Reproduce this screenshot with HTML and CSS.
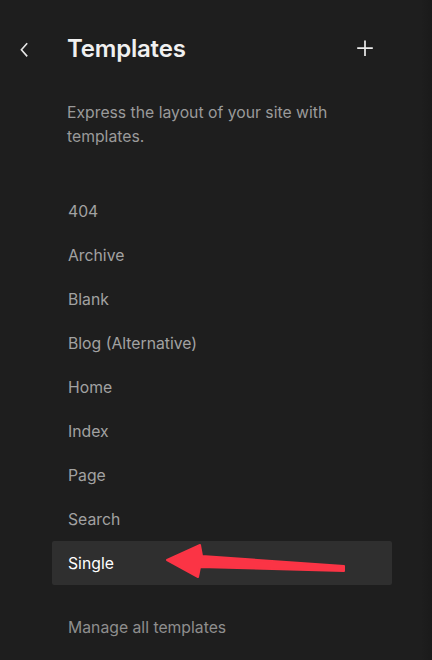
FILE: index.html
```html
<!DOCTYPE html>
<html lang="en">
<head>
<meta charset="utf-8">
<title>Templates</title>
<link rel="stylesheet" href="styles.css">
</head>
<body>
<div class="panel">
  <div class="header">
    <button class="icon-btn back" aria-label="Back">
      <svg width="24" height="24" viewBox="0 0 24 24"><path d="M15.2 6.2L9.4 12.8l5.8 6.6" fill="none" stroke="#e8e8e8" stroke-width="1.6"/></svg>
    </button>
    <h1 class="title">Templates</h1>
    <button class="icon-btn add" aria-label="Add template">
      <svg width="24" height="24" viewBox="0 0 24 24"><path d="M12 3.5v15.5M4.2 11.2h15.6" fill="none" stroke="#ececec" stroke-width="1.7"/></svg>
    </button>
  </div>
  <p class="desc">Express the layout of your site with templates.</p>
  <ul class="list">
    <li class="item">404</li>
    <li class="item">Archive</li>
    <li class="item">Blank</li>
    <li class="item">Blog (Alternative)</li>
    <li class="item">Home</li>
    <li class="item">Index</li>
    <li class="item">Page</li>
    <li class="item">Search</li>
    <li class="item active">Single</li>
  </ul>
  <div class="manage">Manage all templates</div>
</div>
<svg class="arrow" width="432" height="660" viewBox="0 0 432 660">
  <polygon points="167,560 200,545 202,556 344,566 344,571 200,567 198,577" fill="#fb3445" stroke="#fb3445" stroke-width="2" stroke-linejoin="round"/>
</svg>
</body>
</html>
```
FILE: styles.css
```css
* { box-sizing: border-box; }
html, body { margin: 0; padding: 0; }
body {
  width: 432px;
  height: 660px;
  overflow: hidden;
  background: linear-gradient(to right, #1e1e1e 0, #1e1e1e 421px, #1a1a1a 432px);
  font-family: Inter, "Noto Sans", "Liberation Sans", sans-serif;
  color: #a0a0a0;
  position: relative;
}
.panel { display: flex; flex-direction: column; }
.header {
  display: flex;
  align-items: center;
  height: 32px;
  margin-top: 33px;
  padding-left: 12px;
}
.icon-btn {
  width: 24px;
  height: 24px;
  padding: 0;
  border: 0;
  background: none;
  display: flex;
  align-items: center;
  justify-content: center;
}
.back { margin-right: 31px; margin-top: -1px; }
.title {
  flex: 1;
  margin: 0;
  font-size: 24px;
  font-weight: 600;
  line-height: 32px;
  color: #f0f0f0;
  letter-spacing: -0.2px;
}
.add { margin-right: 55px; margin-top: -1px; }
.desc {
  margin: 36px 0 0 67px;
  max-width: 300px;
  font-size: 15.75px;
  line-height: 24px;
  color: #9a9a9a;
}
.list {
  list-style: none;
  margin: 40px 40px 0 52px;
  padding: 0;
}
.item {
  height: 44px;
  display: flex;
  align-items: center;
  padding-left: 16px;
  font-size: 15.75px;
  color: #a2a2a2;
  border-radius: 2px;
}
.item.active {
  background: #2f2f2f;
  color: #ffffff;
}
.manage {
  margin: 20px 0 0 52px;
  height: 44px;
  display: flex;
  align-items: center;
  padding-left: 16px;
  font-size: 15.75px;
  color: #8e8e8e;
}
.arrow {
  position: absolute;
  left: 0;
  top: 0;
  pointer-events: none;
}
```
